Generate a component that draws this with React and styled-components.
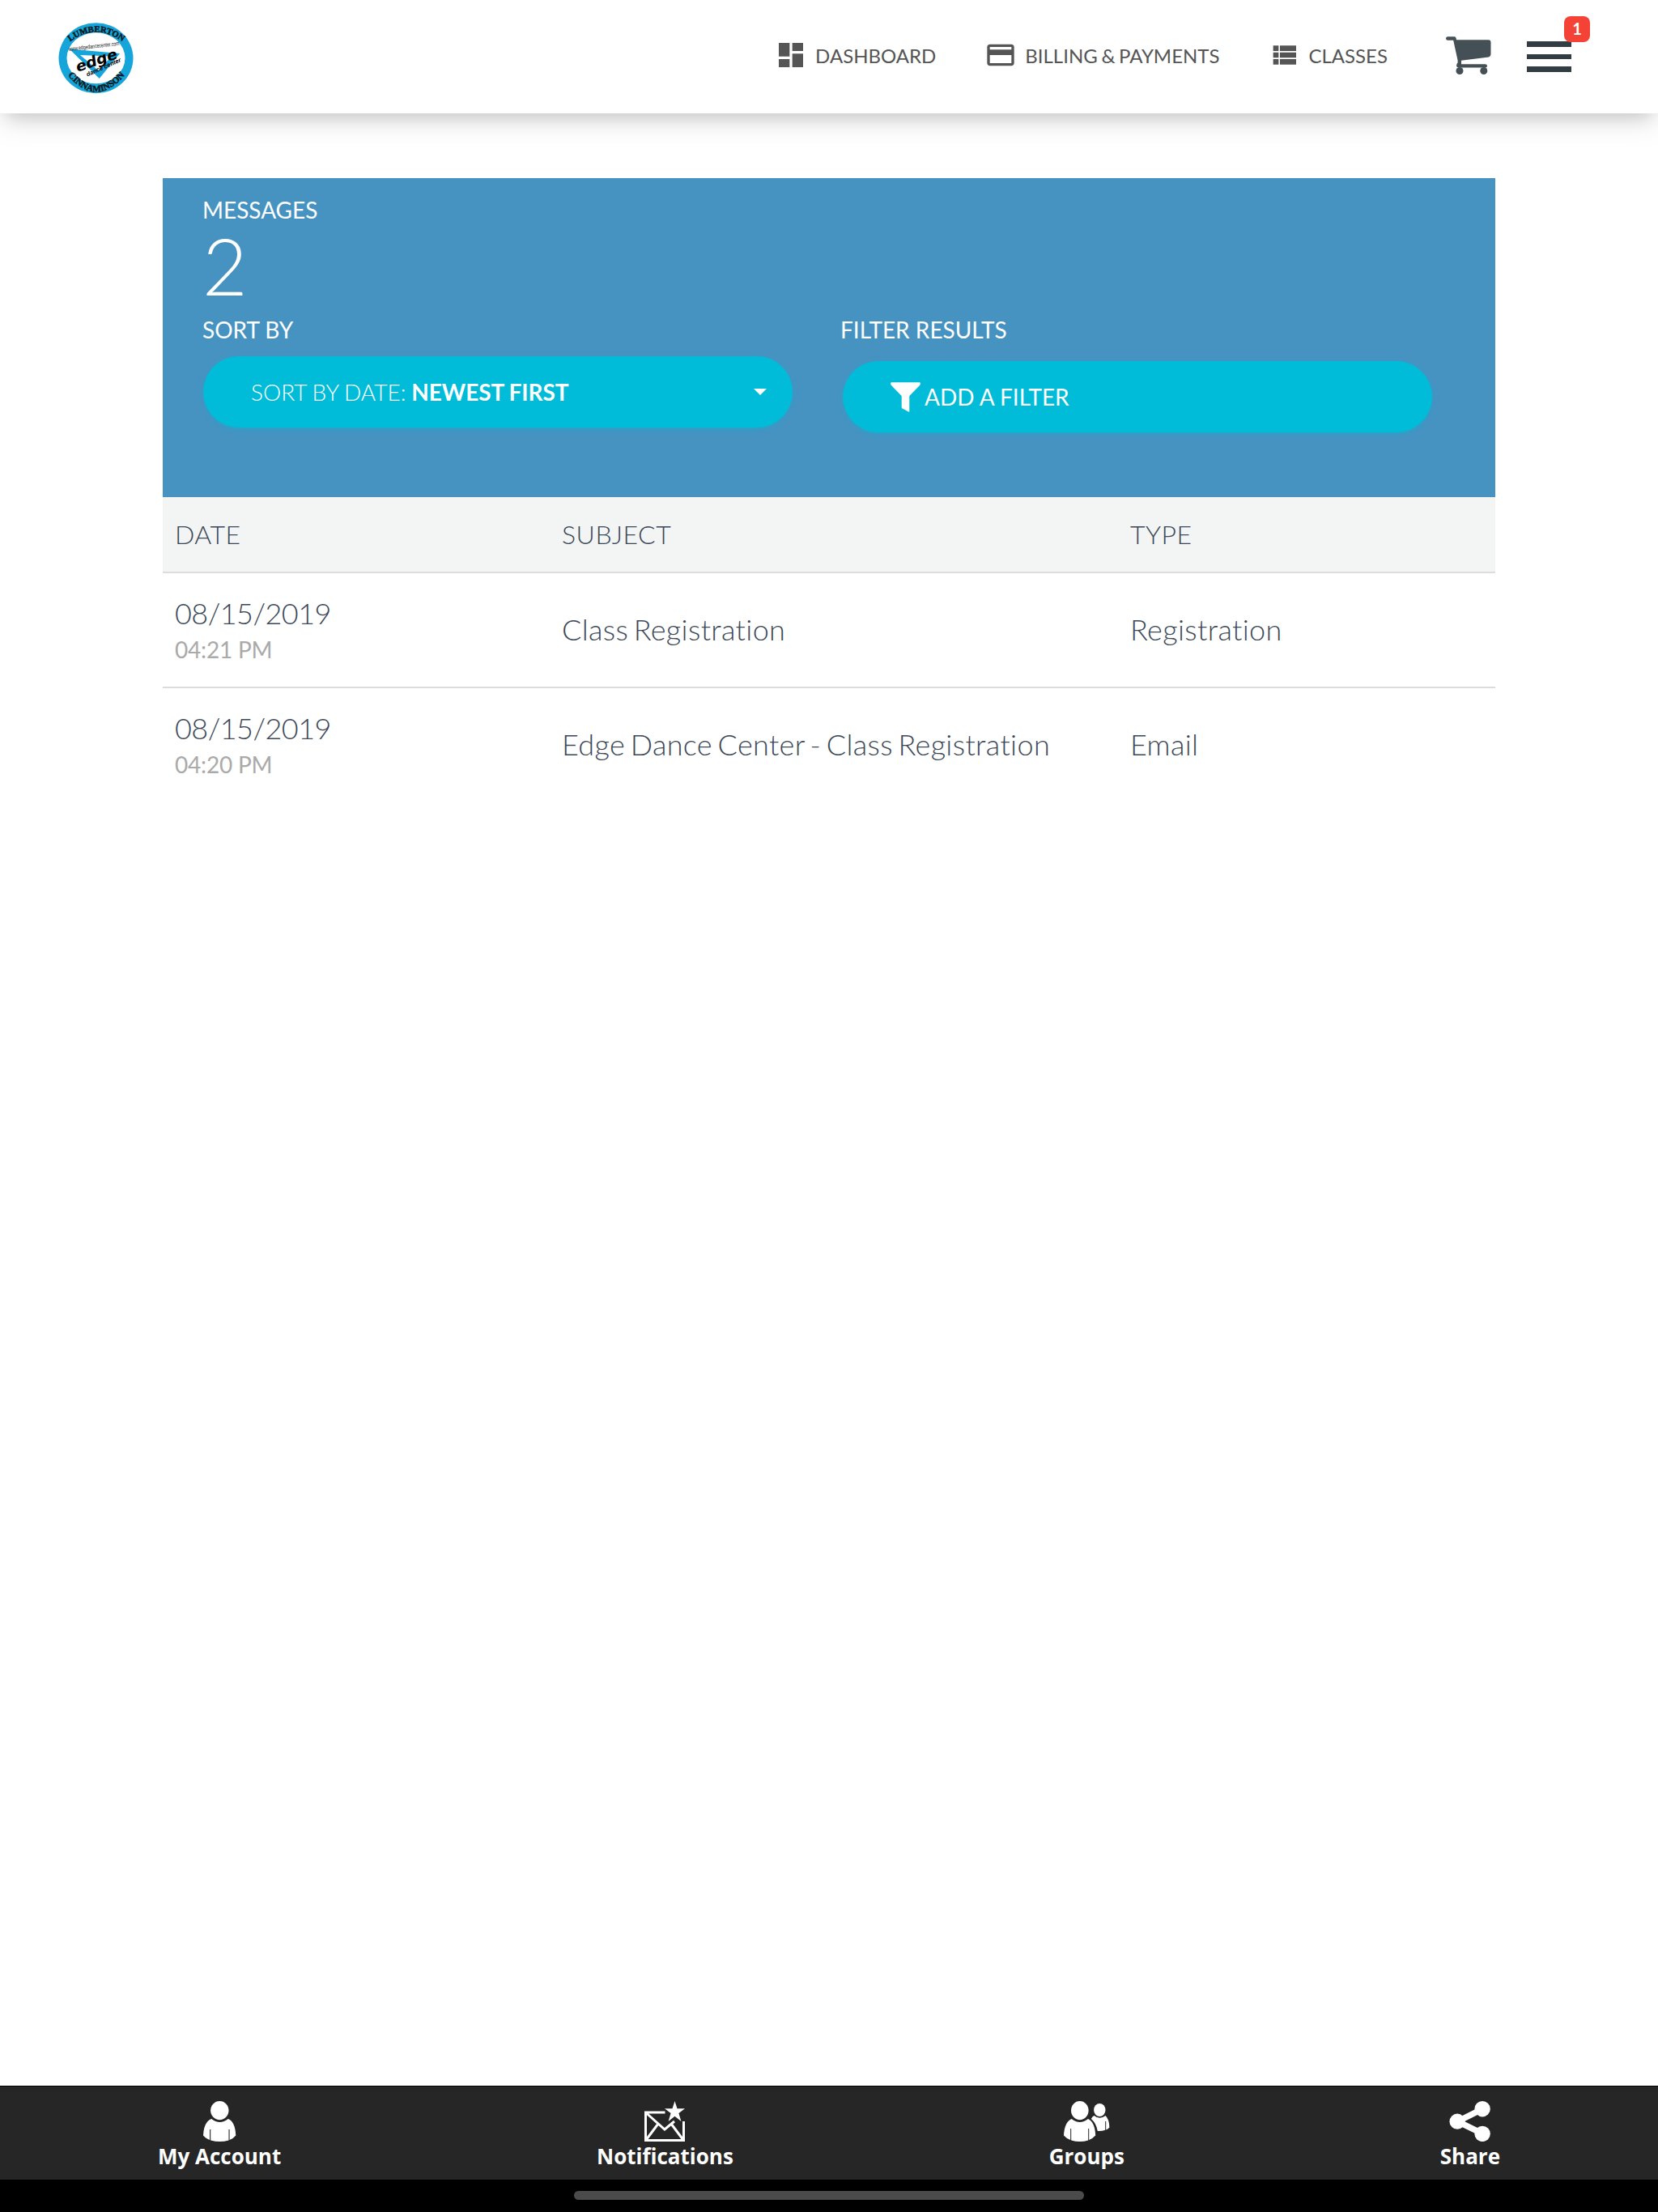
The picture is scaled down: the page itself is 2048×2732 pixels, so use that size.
import React, { useState } from "react";
import styled, { createGlobalStyle } from "styled-components";
import { MdDashboard, MdCreditCard } from "react-icons/md";

const GlobalStyle = createGlobalStyle`
  * {
    box-sizing: border-box;
  }
  body {
    margin: 0;
    background: #fff;
    font-family: Lato, "Open Sans", sans-serif;
    font-variant-ligatures: none;
  }
`;

const messages = [
  { date: "08/15/2019", time: "04:21 PM", subject: "Class Registration", type: "Registration" },
  { date: "08/15/2019", time: "04:20 PM", subject: "Edge Dance Center - Class Registration", type: "Email" },
];

function Logo() {
  return (
    <svg width="94" height="88" viewBox="0 0 94 88" overflow="visible">
      <defs>
        <path id="arcTop" d="M12 25.5 Q46.5 -2.5 82 25.5" />
        <path id="arcBottom" d="M7 59 Q46.5 111.5 87 59" />
      </defs>
      <ellipse cx="46.5" cy="43.8" rx="46" ry="43.5" fill="#16a5da" />
      <ellipse cx="46.5" cy="43.8" rx="36" ry="31.5" fill="#fff" />
      <path d="M13.7 32.5 L76 38 L50.7 69 Z M27 40 L49.5 59 L66 41.5 Z" fill="#16a5da" fillRule="evenodd" />
      <g fontFamily="Liberation Serif, serif" fontWeight="700" fill="#0b1a22" stroke="#0b1a22" strokeWidth="0.5">
        <text fontSize="10.8" textAnchor="middle">
          <textPath href="#arcTop" startOffset="50%">LUMBERTON</textPath>
        </text>
        <text fontSize="11.4" textAnchor="middle">
          <textPath href="#arcBottom" startOffset="50%">CINNAMINSON</textPath>
        </text>
      </g>
      <text x="13" y="35" fontFamily="Liberation Sans, sans-serif" fontSize="7.2" textLength="63" lengthAdjust="spacingAndGlyphs" transform="rotate(-6.5 13 35)" fill="#111">
        www.edgedancecenter.com
      </text>
      <text x="24" y="61" fontFamily="DejaVu Sans, sans-serif" fontWeight="700" fontStyle="italic" fontSize="18" textLength="53" lengthAdjust="spacingAndGlyphs" transform="rotate(-19 24 61)" fill="#000">
        edge
      </text>
      <text x="36" y="66.5" fontFamily="Liberation Sans, sans-serif" fontWeight="700" fontStyle="italic" fontSize="7.5" textLength="46" lengthAdjust="spacingAndGlyphs" transform="rotate(-24 36 66.5)" fill="#000">
        dance center
      </text>
    </svg>
  );
}

function ListIcon() {
  return (
    <svg width="40" height="40" viewBox="0 0 24 24" fill="currentColor">
      <path d="M4 14h4v-4H4v4zm0 5h4v-4H4v4zM4 9h4V5H4v4zm5 5h12v-4H9v4zm0 5h12v-4H9v4zM9 5v4h12V5H9z" />
    </svg>
  );
}

function CartIcon() {
  return (
    <svg width="56" height="47" viewBox="0 0 56 47" fill="#455056">
      <path d="M2 0.3 H10.5 Q12.4 0.3 12.6 2.2 L13 4.2 H53 Q55.5 4.4 55.5 6.8 V22 Q55.4 25 53 25.4 L19 29.8 V34.2 H49 Q51 34.4 51 36.4 Q51 38.4 49 38.4 H15.5 Q13 38.2 13 36 Q13.2 34 14.6 32.6 V29.5 L9.2 4.8 H2 Q0 4.5 0 2.5 Q0 0.5 2 0.3 Z" />
      <circle cx="17" cy="42.5" r="4.5" />
      <circle cx="46.8" cy="42.5" r="4.5" />
    </svg>
  );
}

function FunnelIcon() {
  return (
    <svg width="37" height="37" viewBox="0 0 37 37" fill="#fff">
      <path d="M1 0.2 H36 Q37 0.5 37 2 Q36.8 3 36 4 L23.3 17 V36 Q23.3 37.2 22.2 36.6 L14.5 32.4 Q13.7 31.8 13.7 30.8 V17 L1 4 Q0.2 3 0 2 Q0 0.4 1 0.2 Z" />
    </svg>
  );
}

function PersonIcon() {
  return (
    <svg width="41" height="50" viewBox="0 0 41 50" fill="#fff">
      <ellipse cx="20.3" cy="11.6" rx="11.2" ry="11.6" />
      <path d="M10.2 22 Q20.5 30 30.8 22 Q39.5 25.5 40.3 42.5 Q37.5 46 32.6 48 V35 H31.5 V48.4 Q20.5 51.4 9.2 48.4 V35 H8.1 V48 Q3 46 0 42.5 Q0.8 25.5 10.2 22 Z" />
    </svg>
  );
}

function EnvelopeIcon() {
  return (
    <svg width="50" height="50" viewBox="0 0 50 50">
      <path
        d="M25.5 14 H1.5 V48.5 H48.5 V25 M2 14.5 L25 35 L37 25 M17 28 L2 48 M33 28 L48 48"
        fill="none"
        stroke="#fff"
        strokeWidth="3"
      />
      <path d="M37.5 0 L40.5 9.3 H50 L42.4 15 L45.4 25 L37.5 18.8 L29.6 25 L32.6 15 L25 9.3 H34.5 Z" fill="#fff" />
    </svg>
  );
}

function GroupIcon() {
  return (
    <svg width="57" height="50" viewBox="0 0 57 50" fill="#fff">
      <ellipse cx="19.8" cy="11.6" rx="10.8" ry="11.6" />
      <path d="M9.6 22 Q19.8 30 30 22 Q38.5 26 39.2 42.5 Q36 46 31.2 48 V34 H30.2 V48.4 Q19.8 51.4 9.2 48.4 V34 H8.2 V48 Q3 46 0 42.5 Q0.8 26 9.6 22 Z" />
      <ellipse cx="44.3" cy="11" rx="7.2" ry="8" />
      <path d="M37.5 18 Q44.3 23.5 51.5 18 Q56 22 56.4 32.5 Q55 34.5 52.2 35.4 V25 H51.2 V35.8 Q46.5 37.4 41.8 37 Q40 27 33.8 22 Q35.2 19 37.5 18 Z" />
    </svg>
  );
}

function ShareIcon() {
  return (
    <svg width="51" height="50" viewBox="-0.5 0 51 50" fill="#fff">
      <circle cx="40.6" cy="9.7" r="9.7" />
      <circle cx="9.6" cy="25.2" r="9.6" />
      <circle cx="40.6" cy="40.4" r="9.7" />
      <path d="M41 9.7 L10 25.2 L41 40.4" fill="none" stroke="#fff" strokeWidth="7.5" />
    </svg>
  );
}

function App() {
  const [newestFirst, setNewestFirst] = useState(true);
  const rows = newestFirst ? messages : [...messages].reverse();

  return (
    <Page>
      <GlobalStyle />
      <Header>
        <Logo />
        <Nav>
          <NavLink $gap={60}><MdDashboard size={40} /><span>DASHBOARD</span></NavLink>
          <NavLink $gap={60}><MdCreditCard size={40} /><span>BILLING &amp; PAYMENTS</span></NavLink>
          <NavLink $gap={72}><ListIcon /><span>CLASSES</span></NavLink>
          <CartIcon />
          <MenuButton>
            <span />
            <span />
            <span />
            <Badge>1</Badge>
          </MenuButton>
        </Nav>
      </Header>

      <Content>
        <Panel>
          <Label>MESSAGES</Label>
          <Count>{messages.length}</Count>
          <Filters>
            <div>
              <Label>SORT BY</Label>
              <Pill $top={16} onClick={() => setNewestFirst(!newestFirst)}>
                <SortText>
                  SORT BY DATE: <b>{newestFirst ? "NEWEST FIRST" : "OLDEST FIRST"}</b>
                </SortText>
                <Caret />
              </Pill>
            </div>
            <div>
              <Label>FILTER RESULTS</Label>
              <Pill $top={22} $left={2}>
                <FunnelIcon />
                <FilterText>ADD A FILTER</FilterText>
              </Pill>
            </div>
          </Filters>
        </Panel>

        <HeadRow>
          <span>DATE</span>
          <span>SUBJECT</span>
          <span>TYPE</span>
        </HeadRow>
        {rows.map((m) => (
          <Row key={m.time}>
            <DateCell>
              {m.date}
              <Time>{m.time}</Time>
            </DateCell>
            <TextCell>{m.subject}</TextCell>
            <TextCell>{m.type}</TextCell>
          </Row>
        ))}
      </Content>

      <TabBar>
        <Tab><PersonIcon />My Account</Tab>
        <Tab><EnvelopeIcon />Notifications</Tab>
        <Tab><GroupIcon />Groups</Tab>
        <Tab><ShareIcon />Share</Tab>
      </TabBar>
      <HomeArea>
        <HomeBar />
      </HomeArea>
    </Page>
  );
}

const Page = styled.div`
  width: 2048px;
  height: 2732px;
  display: flex;
  flex-direction: column;
  overflow: hidden;
`;

const Header = styled.header`
  height: 140px;
  flex: none;
  display: flex;
  align-items: center;
  justify-content: space-between;
  padding: 0 84px 4px 72px;
  background: #fff;
  box-shadow: 0 8px 36px rgba(0, 0, 0, 0.12), 0 14px 20px -10px rgba(0, 0, 0, 0.15);

  & > svg {
    margin-top: 8px;
  }
`;

const Nav = styled.nav`
  display: flex;
  align-items: center;

  & > svg {
    margin-top: 1px;
  }
`;

const NavLink = styled.a`
  display: flex;
  align-items: center;
  gap: 10px;
  margin-right: ${(props) => props.$gap}px;
  font-size: 24px;
  line-height: 40px;
  color: #555;
  white-space: nowrap;
  word-spacing: -1.5px;

  span {
    padding-top: 2px;
  }
`;

const MenuButton = styled.button`
  position: relative;
  display: flex;
  flex-direction: column;
  gap: 9px;
  width: 78px;
  margin-left: 44px;
  padding: 4px 0 0;
  border: 0;
  background: none;

  & > span:not(:last-child) {
    width: 55px;
    height: 6.5px;
    background: #323d43;
  }
`;

const Badge = styled.span`
  position: absolute;
  top: -27px;
  right: 0;
  width: 32px;
  height: 32px;
  border-radius: 8px;
  background: #f44336;
  color: #fff;
  font: 700 20px/30px Lato, sans-serif;
  text-align: center;
`;

const Content = styled.main`
  flex: 1;
  width: 1646px;
  margin: 80px 0 0 201px;
`;

const Panel = styled.section`
  height: 394px;
  padding: 22px 78px 0 50px;
  background: #4693c2;
  color: #fff;
`;

const Label = styled.div`
  margin-left: -1px;
  font-size: 28px;
  line-height: 34px;
`;

const Count = styled.div`
  margin: 4px 0 0 -1px;
  font-size: 96px;
  font-weight: 300;
  line-height: 96px;
  height: 110px;
`;

const Filters = styled.div`
  display: grid;
  grid-template-columns: 728px 728px;
  column-gap: 60px;
`;

const Pill = styled.button`
  width: 728px;
  height: 88px;
  margin: ${(props) => props.$top}px 0 0 ${(props) => props.$left || 0}px;
  padding: 0 32px 0 59px;
  display: flex;
  align-items: center;
  border: 0;
  border-radius: 44px;
  background: #00bcd8;
  box-shadow: 0 4px 4px rgba(0, 188, 216, 0.14), 0 6px 2px -4px rgba(0, 188, 216, 0.2), 0 2px 10px rgba(0, 188, 216, 0.12);
  color: #fff;
  font: 400 28px/34px Lato, sans-serif;
  text-align: left;
`;

const SortText = styled.span`
  flex: 1;
  padding-bottom: 1px;
  font-weight: 300;
  word-spacing: -0.8px;

  b {
    font-weight: 700;
    letter-spacing: -0.05px;
  }
`;

const Caret = styled.span`
  border: 8px solid transparent;
  border-top-color: #fff;
  border-bottom: 0;
`;

const FilterText = styled.span`
  margin-left: 5px;
`;

const HeadRow = styled.div`
  display: grid;
  grid-template-columns: 478px 702px 1fr;
  align-items: center;
  height: 94px;
  padding: 0 15px 2px;
  background: #f3f5f5;
  border-bottom: 2px solid #ddd;
  color: #3c4858;
  font-size: 32px;
  font-weight: 300;
  letter-spacing: 0.5px;
`;

const Row = styled.div`
  display: grid;
  grid-template-columns: 478px 702px 1fr;
  align-items: center;
  height: 142px;
  padding: 0 15px;
  border-bottom: 2px solid #ddd;
  color: #3c4858;
  font-size: 36px;
  font-weight: 300;

  &:last-child {
    border-bottom-color: transparent;
  }
`;

const DateCell = styled.div`
  padding-top: 2px;
  line-height: 44px;
  letter-spacing: -0.55px;
`;

const Time = styled.div`
  margin-top: 1px;
  font-size: 28px;
  font-weight: 400;
  line-height: 44px;
  letter-spacing: -0.2px;
  color: #aaa;
`;

const TextCell = styled.span`
  padding-bottom: 2px;
  letter-spacing: 0.36px;
  word-spacing: -3.6px;
`;

const TabBar = styled.footer`
  height: 116px;
  flex: none;
  display: flex;
  justify-content: space-around;
  background: #262626;
  border-top: 1px solid #000;
`;

const Tab = styled.div`
  display: flex;
  flex-direction: column;
  align-items: center;
  padding-top: 18px;
  color: #fff;
  font: 700 26px/36px "Open Sans", sans-serif;
`;

const HomeArea = styled.div`
  height: 40px;
  flex: none;
  display: flex;
  justify-content: center;
  padding-top: 14px;
  background: #000;
`;

const HomeBar = styled.div`
  width: 630px;
  height: 11px;
  border-radius: 6px;
  background: #4b4b4b;
`;

export default App;
